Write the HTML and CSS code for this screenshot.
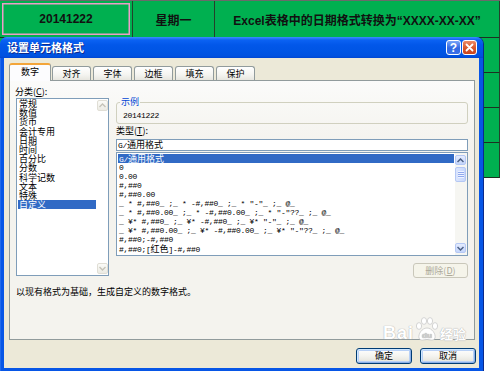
FILE: index.html
```html
<!DOCTYPE html>
<html lang="zh-CN">
<head>
<meta charset="utf-8">
<title>设置单元格格式</title>
<link rel="stylesheet" href="styles.css">
</head>
<body>
<div class="sheet">
  <div class="cell sel">20141222</div>
  <div class="cell">星期一</div>
  <div class="cell">Excel表格中的日期格式转换为“XXXX-XX-XX”</div>
  <div class="cell"></div><div class="cell"></div><div class="cell"></div>
  <div class="cell"></div><div class="cell"></div><div class="cell"></div>
  <div class="cell"></div><div class="cell"></div><div class="cell"></div>
  <div class="cell"></div><div class="cell"></div><div class="cell"></div>
</div>

<div class="dialog">
  <div class="titlebar">
    <span class="title">设置单元格格式</span>
    <span class="tb help">?</span>
    <span class="tb close"><svg viewBox="0 0 13 13" width="13" height="13"><path d="M3.5 3.5 L9.5 9.5 M9.5 3.5 L3.5 9.5" stroke="#fff" stroke-width="1.8" stroke-linecap="round"/></svg></span>
  </div>
  <div class="body">
    <div class="tabs">
      <div class="tab active">数字</div>
      <div class="tab">对齐</div>
      <div class="tab">字体</div>
      <div class="tab">边框</div>
      <div class="tab">填充</div>
      <div class="tab">保护</div>
    </div>
    <div class="panel">
      <div class="cols">
        <div class="leftcol">
          <div class="lbl">分类(<u>C</u>):</div>
          <div class="listbox cat">
            <ul class="items">
              <li>常规</li>
              <li>数值</li>
              <li>货币</li>
              <li>会计专用</li>
              <li>日期</li>
              <li>时间</li>
              <li>百分比</li>
              <li>分数</li>
              <li>科学记数</li>
              <li>文本</li>
              <li>特殊</li>
              <li class="on">自定义</li>
            </ul>
            <div class="vscroll off">
              <span class="sbtn"><svg width="7" height="5" viewBox="0 0 7 5"><path d="M0.5 4 L3.5 1 L6.5 4" fill="none" stroke="currentColor" stroke-width="1.4"/></svg></span>
              <span class="sbtn"><svg width="7" height="5" viewBox="0 0 7 5"><path d="M0.5 1 L3.5 4 L6.5 1" fill="none" stroke="currentColor" stroke-width="1.4"/></svg></span>
            </div>
          </div>
        </div>
        <div class="rightcol">
          <fieldset class="sample"><legend>示例</legend><div class="sval mf">20141222</div></fieldset>
          <div class="lbl typelbl">类型(<u>T</u>):</div>
          <div class="input mf">G/<span class="zh">通用格式</span></div>
          <div class="listbox types">
            <ul class="items mf">
              <li class="on">G/<span class="zh">通用格式</span></li>
              <li>0</li>
              <li>0.00</li>
              <li>#,##0</li>
              <li>#,##0.00</li>
              <li>_ * #,##0_ ;_ * -#,##0_ ;_ * "-"_ ;_ @_</li>
              <li>_ * #,##0.00_ ;_ * -#,##0.00_ ;_ * "-"??_ ;_ @_</li>
              <li>_ ¥* #,##0_ ;_ ¥* -#,##0_ ;_ ¥* "-"_ ;_ @_</li>
              <li>_ ¥* #,##0.00_ ;_ ¥* -#,##0.00_ ;_ ¥* "-"??_ ;_ @_</li>
              <li>#,##0;-#,##0</li>
              <li>#,##0;[<span class="zh">红色</span>]-#,##0</li>
            </ul>
            <div class="vscroll">
              <span class="sbtn"><svg width="7" height="5" viewBox="0 0 7 5"><path d="M0.5 4 L3.5 1 L6.5 4" fill="none" stroke="currentColor" stroke-width="1.5"/></svg></span>
              <span class="thumb"></span>
              <span class="track"></span>
              <span class="sbtn"><svg width="7" height="5" viewBox="0 0 7 5"><path d="M0.5 1 L3.5 4 L6.5 1" fill="none" stroke="currentColor" stroke-width="1.5"/></svg></span>
            </div>
          </div>
          <div class="delrow"><button class="btn dis">删除(<u>D</u>)</button></div>
        </div>
      </div>
      <p class="desc">以现有格式为基础，生成自定义的数字格式。</p>
    </div>
    <div class="btnrow">
      <button class="btn def">确定</button>
      <button class="btn def">取消</button>
    </div>
  </div>
  <div class="watermark">
    <span class="wm-bai">Bai</span>
    <svg class="wm-paw" width="24" height="25" viewBox="0 0 24 25">
      <g fill="#fff" stroke="#c9c9c9" stroke-width="0.8">
        <ellipse cx="4" cy="9" rx="2.6" ry="3.4"/>
        <ellipse cx="9" cy="4" rx="2.6" ry="3.4"/>
        <ellipse cx="15" cy="4" rx="2.6" ry="3.4"/>
        <ellipse cx="20" cy="9" rx="2.6" ry="3.4"/>
        <path d="M12 11 C7 11 3 17 4 21 C5 24 9 23 12 22.5 C15 23 19 24 20 21 C21 17 17 11 12 11 Z"/>
      </g>
      <text x="12" y="21" text-anchor="middle" font-family="Liberation Sans, sans-serif" font-size="8" font-weight="bold" fill="#d0d0d0">du</text>
    </svg>
    <span class="wm-jy">经验</span>
  </div>
</div>
</body>
</html>
```

FILE: styles.css
```css
* { box-sizing: border-box; margin: 0; padding: 0; }
html, body { width: 500px; height: 371px; overflow: hidden; background: #fff; }
body {
  position: relative;
  font-family: "Noto Sans CJK SC", "Liberation Sans", sans-serif;
  font-size: 9px;
  color: #000;
}

/* spreadsheet behind */
.sheet {
  display: grid;
  grid-template-columns: 133px 82px 285px;
  grid-template-rows: 37px repeat(4, 35px);
  border-top: 1px solid #6a6a6a;
}
.cell {
  background: #00b050;
  border-right: 1px solid #24402b;
  border-bottom: 1px solid #1d3022;
  display: flex;
  align-items: center;
  justify-content: center;
  font: bold 12px "Liberation Sans", "Noto Sans CJK SC", sans-serif;
  color: #111;
  white-space: nowrap;
}
.cell.sel { box-shadow: inset 0 0 0 2px #00b050, inset 0 0 0 3.5px #ee9dc8; }

/* dialog window */
.dialog {
  position: absolute;
  left: 0;
  top: 37px;
  width: 483px;
  height: 334px;
  display: flex;
  flex-direction: column;
  background: linear-gradient(to right, #3a7ef2 0, #0756e6 1px, #0756e6 100%);
  border-radius: 7px 7px 0 0;
  box-shadow: 1px 0 0 #0a2a8c;
}
.titlebar {
  height: 21px;
  display: flex;
  align-items: center;
  gap: 1px;
  padding: 0 6px 0 7px;
  border-radius: 7px 7px 0 0;
  background: linear-gradient(#3a8dff 0, #0b62f3 3px, #0257e9 8px, #0055e5 14px, #0052e0 19px, #0046d2 21px);
}
.title {
  flex: 1;
  color: #fff;
  font-weight: bold;
  font-size: 11px;
  line-height: 13px;
  text-shadow: 1px 1px 0 #0c2a90;
}
.tb {
  width: 15px;
  height: 15px;
  border: 1px solid #fff;
  border-radius: 3px;
  display: flex;
  align-items: center;
  justify-content: center;
}
.help {
  background: linear-gradient(#79a5f8, #3167e2 55%, #3a70e8);
  color: #fff;
  font: bold 12px "Liberation Sans", sans-serif;
}
.close { background: linear-gradient(#ec8a66, #d8572c 55%, #c9451f); }

.body {
  flex: 1;
  margin: 0 4px 3px;
  background: #ece9d8;
  display: flex;
  flex-direction: column;
}

/* tabs */
.tabs {
  height: 22px;
  display: flex;
  align-items: flex-end;
  gap: 2px;
  padding-left: 5px;
}
.tab {
  width: 39px;
  height: 14px;
  border: 1px solid #919b9c;
  border-bottom: 0;
  border-radius: 3px 3px 0 0;
  background: linear-gradient(#ffffff, #f4f4f0 60%, #e7e6df);
  display: flex;
  align-items: center;
  justify-content: center;
  line-height: 10px;
}
.tab.active {
  width: 42px;
  height: 18px;
  margin-bottom: -1px;
  margin-right: -1px;
  padding-bottom: 2px;
  position: relative;
  z-index: 1;
  background: #fcfcfe;
  border-top: 2px solid #f3a53a;
}

/* tab panel */
.panel {
  height: 260px;
  margin: 0 4px 0 5px;
  border: 1px solid #919b9c;
  background: linear-gradient(#fbfbfa, #f4f3ee 25%);
  padding: 5px 6px 0;
}
.cols { display: flex; gap: 7px; }
.leftcol { width: 93px; }
.rightcol { flex: 1; min-width: 0; display: flex; flex-direction: column; }
.lbl { height: 12px; line-height: 12px; white-space: nowrap; }
.leftcol .lbl { margin-left: -1px; }
.typelbl { margin: 1px 0 2px; }

.listbox { display: flex; border: 1px solid #7f9db9; background: #fff; }
.cat { height: 178px; }
.items { flex: 1; min-width: 0; list-style: none; padding: 0 1px; overflow: hidden; }
.items li { white-space: nowrap; }
.cat li { height: 9.2px; line-height: 9.2px; padding-left: 1px; }
.items li.on { background: #316ac5; color: #fff; }

.mf {
  font-family: "Liberation Mono", "Noto Sans CJK SC", monospace;
  font-size: 8px;
  letter-spacing: -0.3px;
}
.zh { font-family: "Noto Sans CJK SC", sans-serif; font-size: 9px; letter-spacing: 0; }

.types { height: 104px; margin-top: 1px; }
.types .items { padding: 1px 1px 0; }
.types li { height: 9px; line-height: 9px; padding-left: 1px; }

.vscroll { display: flex; flex-direction: column; width: 11px; }
.sbtn {
  height: 11px;
  display: flex;
  align-items: center;
  justify-content: center;
  border-radius: 2px;
}
.off { padding: 1px 0; justify-content: space-between; }
.off .sbtn {
  background: linear-gradient(#fbfbf8, #ecebe4);
  border: 1px solid #e0ded5;
  color: #c5c3b9;
}
.types .vscroll { width: 12px; padding: 2px 1px 2px 0; background: #f6f6f2; }
.types .sbtn {
  height: 10px;
  background: linear-gradient(#e4ecfe, #c4d5fb);
  border: 1px solid #b5c8f4;
  color: #4d6185;
}
.thumb {
  height: 15px;
  margin-top: 2px;
  border: 1px solid #b5c8f4;
  border-radius: 2px;
  background: linear-gradient(to right, #dbe5fd, #c7d7fb);
  display: flex;
  align-items: center;
  justify-content: center;
}
.thumb::after {
  content: "";
  width: 6px;
  height: 7px;
  background: repeating-linear-gradient(#eef3ff 0 1px, #90a9ee 1px 2px);
}
.track { flex: 1; }

.input {
  height: 12px;
  border: 1px solid #7f9db9;
  background: #fff;
  line-height: 10px;
  padding-left: 1px;
  white-space: nowrap;
  overflow: hidden;
}

.sample {
  margin-top: 11px;
  border: 1px solid #d0d0bf;
  border-radius: 3px;
  padding: 3px 6px 2px;
  min-width: 0;
}
.sample legend {
  color: #0046d5;
  padding: 0 1px;
  margin-left: -3px;
  line-height: 10px;
  font-size: 9px;
}
.sval { line-height: 11px; }

.delrow { display: flex; justify-content: flex-end; margin-top: 7px; }
.btn {
  height: 16px;
  border: 1px solid #003c74;
  border-radius: 3px;
  background: linear-gradient(#ffffff, #f4f4f0 50%, #e3e1d8);
  font: 9px "Noto Sans CJK SC", sans-serif;
  color: #000;
  display: flex;
  align-items: center;
  justify-content: center;
  line-height: 10px;
}
.btn.dis {
  width: 55px;
  height: 15px;
  border-color: #c9c7ba;
  color: #aca899;
  background: #f5f4ea;
}
.desc { margin-top: 9px; line-height: 10px; white-space: nowrap; }

.btnrow {
  height: 28px;
  display: flex;
  justify-content: flex-end;
  gap: 8px;
  padding: 8px 3px 0 0;
}
.btnrow .btn { width: 56px; height: 16px; }
.btn.def { box-shadow: inset 1px 1px 0 #cee7ff, inset -1px -1px 0 #8aaee6, inset 0 0 0 2px #b9d1f6; }

/* baidu watermark overlay */
.watermark {
  position: absolute;
  left: 383px;
  top: 280px;
  display: flex;
  align-items: flex-end;
  gap: 1px;
  pointer-events: none;
  color: #fff;
  text-shadow: 0 0 1px #a9a9a9, 0 0 1px #bdbdbd;
}
.wm-bai { font: bold 18px/18px "Liberation Sans", sans-serif; letter-spacing: 1px; }
.wm-paw { display: block; }
.wm-jy { font: bold 13px/14px "Noto Sans CJK SC", sans-serif; margin-bottom: 1px; }
```
